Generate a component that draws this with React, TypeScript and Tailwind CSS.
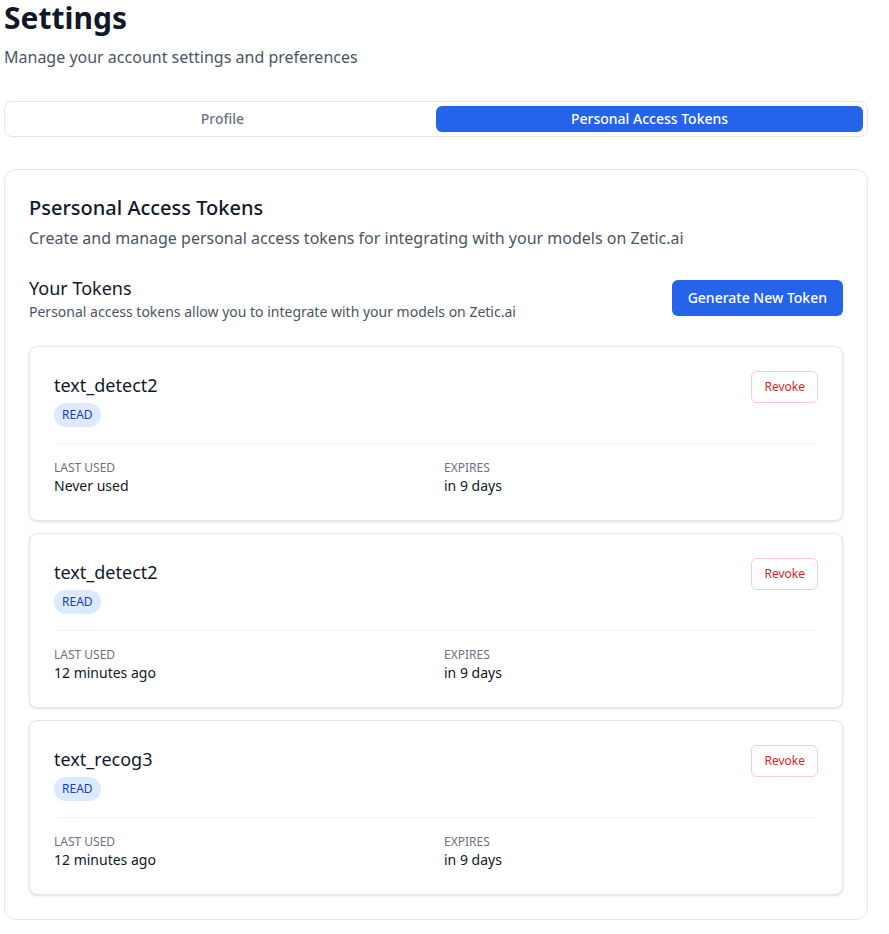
import React, { useState } from 'react';

type Token = {
  id: number;
  name: string;
  scope: string;
  lastUsed: string;
  expires: string;
};

const tokens: Token[] = [
  { id: 1, name: 'text_detect2', scope: 'READ', lastUsed: 'Never used', expires: 'in 9 days' },
  { id: 2, name: 'text_detect2', scope: 'READ', lastUsed: '12 minutes ago', expires: 'in 9 days' },
  { id: 3, name: 'text_recog3', scope: 'READ', lastUsed: '12 minutes ago', expires: 'in 9 days' },
];

function TokenCard({ token }: { token: Token }) {
  return (
    <div className="rounded-lg border border-[#e5e7eb] bg-white p-6 shadow-sm">
      <div className="flex items-start justify-between">
        <div>
          <h4 className="text-lg leading-7 text-[#111827]">{token.name}</h4>
          <span className="mt-1 inline-flex h-6 items-center rounded-full bg-[#dbeafe] px-2 text-xs text-[#1e40af]">
            {token.scope}
          </span>
        </div>
        <button className="h-8 rounded-md border border-[#fecaca] bg-white px-3 text-xs text-[#dc2626] hover:bg-red-50">
          Revoke
        </button>
      </div>
      <div className="mt-4 grid grid-cols-2 gap-4 border-t border-[#f3f4f6] pt-4">
        <div>
          <p className="text-xs text-[#6b7280]">LAST USED</p>
          <p className="text-sm text-[#111827]">{token.lastUsed}</p>
        </div>
        <div>
          <p className="text-xs text-[#6b7280]">EXPIRES</p>
          <p className="text-sm text-[#111827]">{token.expires}</p>
        </div>
      </div>
    </div>
  );
}

export default function App() {
  const [tab, setTab] = useState<'profile' | 'tokens'>('tokens');

  return (
    <div className="min-h-screen bg-white pl-1 font-['Noto_Sans',sans-serif]">
      <div className="w-[864px]">
        <h1 className="text-3xl font-bold text-[#111827]">Settings</h1>
        <p className="mt-[9px] text-base text-[#4b5563]">Manage your account settings and preferences</p>

        {/* Tabs */}
        <div className="mt-8 grid grid-cols-2 rounded-lg border border-[#e5e7eb] p-1">
          <button
            onClick={() => setTab('profile')}
            className={
              tab === 'profile'
                ? 'h-[26px] rounded-md bg-[#2563eb] text-sm font-medium text-white'
                : 'h-[26px] rounded-md text-sm font-medium text-[#6b7280]'
            }
          >
            Profile
          </button>
          <button
            onClick={() => setTab('tokens')}
            className={
              tab === 'tokens'
                ? 'h-[26px] rounded-md bg-[#2563eb] text-sm font-medium text-white'
                : 'h-[26px] rounded-md text-sm font-medium text-[#6b7280]'
            }
          >
            Personal Access Tokens
          </button>
        </div>

        {/* Tokens panel */}
        <div className="mt-8 rounded-xl border border-[#e5e7eb] bg-white p-6">
          <h2 className="text-xl font-medium text-[#111827]">Psersonal Access Tokens</h2>
          <p className="mt-1 text-base text-[#4b5563]">
            Create and manage personal access tokens for integrating with your models on Zetic.ai
          </p>

          <div className="mt-6 flex items-center justify-between">
            <div>
              <h3 className="text-lg leading-7 text-[#111827]">Your Tokens</h3>
              <p className="text-sm text-[#4b5563]">Personal access tokens allow you to integrate with your models on Zetic.ai</p>
            </div>
            <button className="h-9 rounded-md bg-[#2563eb] px-4 text-sm font-medium text-white hover:bg-blue-700">
              Generate New Token
            </button>
          </div>

          <div className="mt-6 flex flex-col gap-3">
            {tokens.map((t) => (
              <TokenCard key={t.id} token={t} />
            ))}
          </div>
        </div>
      </div>
    </div>
  );
}
